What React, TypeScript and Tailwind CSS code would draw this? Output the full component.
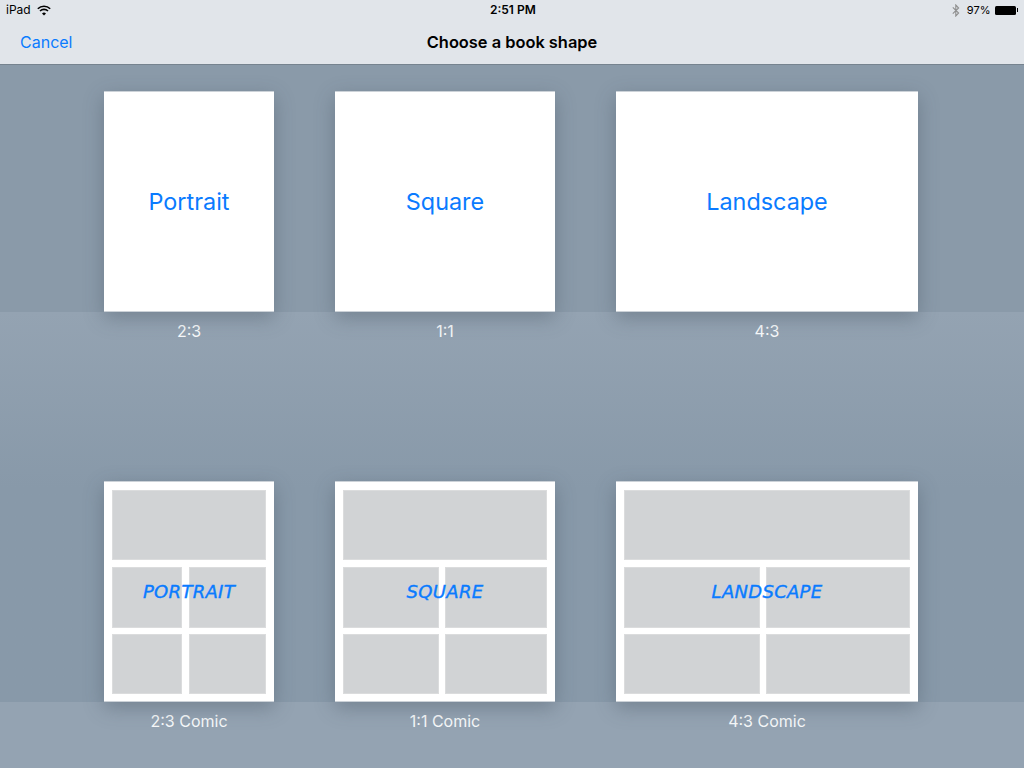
import { ReactNode } from "react";

const columns = "grid grid-cols-[170px_220px_302px] gap-x-[61px] pl-[104px]";

const Panel = ({ className = "" }: { className?: string }) => (
  <div className={`border border-[#dbdcdd] bg-[#d1d3d5] ${className}`} />
);

const Card = ({ children }: { children: ReactNode }) => (
  <div className="relative h-[221px] border-t border-b border-[#ccd2d8] bg-white shadow-[0_6px_18px_rgba(60,75,90,0.36)]">
    {children}
  </div>
);

const PlainCard = ({ label }: { label: string }) => (
  <Card>
    <div className="flex h-full items-center justify-center text-[23.4px] text-[#0a7bff]">{label}</div>
  </Card>
);

const ComicCard = ({ label, cols }: { label: string; cols: string }) => (
  <Card>
    <div className="flex h-full flex-col px-2 pt-2">
      <Panel className="h-[70px]" />
      <div className={`mt-[7px] grid h-[61px] ${cols}`}>
        <Panel />
        <Panel />
      </div>
      <div className={`mt-[6px] grid h-[60px] ${cols}`}>
        <Panel />
        <Panel />
      </div>
    </div>
    <div className="absolute inset-0 flex items-center justify-center pb-[1px] font-['DejaVu_Sans',sans-serif] text-[18px] italic tracking-[0.3px] text-[#0a7bff] [-webkit-text-stroke:0.4px_#0a7bff]">
      {label}
    </div>
  </Card>
);

const Captions = ({ items, className }: { items: string[]; className: string }) => (
  <div className={`${columns} text-center text-[16px] text-[#f7f9fa] ${className}`}>
    {items.map((item) => (
      <div key={item}>{item}</div>
    ))}
  </div>
);

const StatusBar = () => (
  <div className="relative flex h-5 items-center justify-between pl-[6px] pr-[6px] text-[12px] text-black">
    <div className="flex items-center gap-[6px]">
      <span>iPad</span>
      <svg width="14" height="11" viewBox="0 0 14 11" fill="none" stroke="#000" strokeWidth="1.6">
        <path d="M.8 3.8a8.8 8.8 0 0 1 12.4 0" />
        <path d="M3 6a5.7 5.7 0 0 1 8 0" />
        <path d="M7 10.6 5 8.4a2.9 2.9 0 0 1 4 0Z" fill="#000" stroke="none" />
      </svg>
    </div>
    <span className="absolute left-[490px] font-semibold">2:51 PM</span>
    <div className="flex items-center">
      <svg width="8" height="13" viewBox="0 0 8 13" fill="none" stroke="#8e8e8e" strokeWidth="1.1">
        <path d="M.8 3.4 6.6 9 3.8 12V1l2.8 3L.8 9.6" />
      </svg>
      <span className="ml-[7px] whitespace-nowrap text-[11px]">97%</span>
      <div className="ml-[4px] flex items-center">
        <div className="h-[9px] w-[21px] rounded-[1.5px] bg-black" />
        <div className="ml-[1px] h-[4px] w-[1.5px] bg-black" />
      </div>
    </div>
  </div>
);

export default function App() {
  return (
    <div className="h-[768px] w-[1024px] overflow-hidden font-['Inter',sans-serif]">
      <header className="h-[65px] border-b border-[#76838f] bg-[#e1e5ea]">
        <StatusBar />
        <div className="relative flex h-[44px] items-center justify-center">
          <span className="absolute left-5 text-[16px] text-[#0a7bff]">Cancel</span>
          <span className="text-[16.4px] font-semibold text-black">Choose a book shape</span>
        </div>
      </header>

      <section className="h-[247px] bg-[#8a9aa9] pt-[26px]">
        <div className={columns}>
          <PlainCard label="Portrait" />
          <PlainCard label="Square" />
          <PlainCard label="Landscape" />
        </div>
      </section>

      <section className="h-[390px] bg-gradient-to-b from-[#94a3b2] to-[#8899a9] to-[45%] pt-[7px]">
        <Captions items={["2:3", "1:1", "4:3"]} className="h-[162px]" />
        <div className={columns}>
          <ComicCard label="PORTRAIT" cols="grid-cols-[70px_77px] gap-x-[7px]" />
          <ComicCard label="SQUARE" cols="grid-cols-[96px_102px] gap-x-[6px]" />
          <ComicCard label="LANDSCAPE" cols="grid-cols-[136px_144px] gap-x-[6px]" />
        </div>
      </section>

      <section className="h-[66px] bg-[#94a3b2] pt-[7px]">
        <Captions items={["2:3 Comic", "1:1 Comic", "4:3 Comic"]} className="" />
      </section>
    </div>
  );
}
